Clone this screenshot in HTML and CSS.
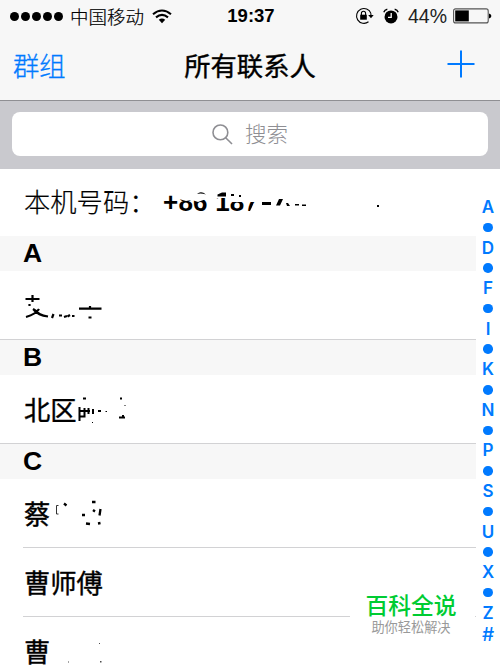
FILE: index.html
```html
<!DOCTYPE html>
<html lang="zh-CN">
<head>
<meta charset="utf-8">
<title>所有联系人</title>
<link rel="stylesheet" href="styles.css">
</head>
<body>
<div class="phone">
  <header class="header">
    <div class="status">
      <div class="status-left">
        <div class="signal"><i></i><i></i><i></i><i></i><i></i></div>
        <span class="carrier">中国移动</span>
        <svg class="wifi" width="20" height="15" viewBox="0 0 20 15"><g fill="none" stroke="#000" stroke-width="2.1"><path d="M1 5.2Q10-2.2 19 5.2"/><path d="M4 8.4Q10 3.4 16 8.4"/></g><path d="M6.8 10.8Q10 8.4 13.2 10.8L10 14.2Z"/></svg>
      </div>
      <span class="time">19:37</span>
      <div class="status-right">
        <svg width="19" height="18" viewBox="0 0 19 18"><path d="M15.9 6.4A7.4 7.4 0 1 0 13.5 14.8M15.9 6.4V9" fill="none" stroke="#000" stroke-width="1.1"/><path d="M13.2 8H18.7L16 11.2Z"/><rect x="5.2" y="7.7" width="6.6" height="5"/><path d="M6.4 8V6.3a2.1 2.1 0 0 1 4.2 0V8" fill="none" stroke="#000" stroke-width="1.1"/></svg>
        <svg class="alarm" width="16" height="17" viewBox="0 0 16 17"><circle cx="8" cy="8.9" r="6.5"/><path d="M.8 4.2Q1.6 1.8 4.3 1.3M11.7 1.3Q14.4 1.8 15.2 4.2" fill="none" stroke="#000" stroke-width="1.4"/><path d="M8.2 5V9.3H5" fill="none" stroke="#fff" stroke-width="1.3"/></svg>
        <span class="percent">44%</span>
        <svg class="battery" width="39" height="16" viewBox="0 0 39 16"><rect x=".6" y=".9" width="34.6" height="14" rx="2" fill="none" stroke="#555" stroke-width="1.1"/><rect x="2.2" y="2.4" width="13.6" height="11"/><path d="M36 5.4Q38.4 6 38.4 8T36 10.4Z"/></svg>
      </div>
    </div>
    <nav class="nav">
      <a class="groups">群组</a>
      <h1>所有联系人</h1>
      <svg class="add" width="28" height="28" viewBox="0 0 28 28"><path d="M14 .5V27.5M.5 14H27.5" stroke="#007aff" stroke-width="2"/></svg>
    </nav>
  </header>

  <div class="search">
    <div class="field">
      <svg width="21" height="21" viewBox="0 0 21 21"><g fill="none" stroke="#8e8e93" stroke-width="1.6"><circle cx="8.4" cy="8.4" r="7.4"/><path d="M13.7 13.7L20 20"/></g></svg>
      <span>搜索</span>
    </div>
  </div>

  <main class="content">
    <div class="list">
      <div class="row own">
        <span class="own-label">本机号码：</span>
        <span class="number">+86 187-7
          <svg class="smudge" width="230" height="40" viewBox="163 182 230 40">
            <path d="M179 188H300V216H257V202H245L240 202H230V198H210V202L206 199L198 202L192 200L186 201L179 199Z" fill="#fff"/>
            <path d="M254 203H259L256 211H250Z" fill="#fff"/>
            <path d="M217.500 196.500V194.500L222 192.500H226V196.500ZM197 194Q201 190.500 206 194.500Q201 193 197 194ZM231 194h3v2h-3zM239 195h2v2h-2zM262 202H271V205H262ZM276 205.500L279 199H283L280 205.500ZM286 203h2l2 3h-3zM295 204h4v1.500h-4zM302 204.500h4v1.500h-4zM377 205h2v2h-2z"/>
          </svg>
        </span>
      </div>

      <div class="section">A</div>
      <div class="row last">
        <svg class="marks" width="110" height="40" viewBox="24 285 110 40"><g fill="none" stroke="#000" stroke-width="2.200"><path d="M25.500 299H39.500M32.500 295V302M29.500 304V306M33 309L39 313M26 317Q36 314 39 309M34 310Q38 315 48 316.500M79 308.600H101.500M88.500 317.500H91.500M90 306V309"/><path d="M53.500 314L52 318M59 315.500H62M64 317L67 316M67.500 316.500L70 315M72 316H74.500"/></g></svg>
      </div>

      <div class="section">B</div>
      <div class="row last">
        <span class="name">北区</span>
        <svg class="marks" width="56" height="40" viewBox="77 389 56 40"><g fill="none" stroke="#000" stroke-width="2"><path d="M79.500 407V421M79 411H90M80 416.500H84.500V408M88.500 408V414M93 409V414M98 411H101M83 398.500H86M120 398.500H122M119 417.500H125M122 416H124"/><path d="M105.500 411.500h1.500M124.500 405.500h1M92 422.500h1" stroke-width="1"/></g></svg>
      </div>

      <div class="section">C</div>
      <div class="row">
        <span class="name">蔡</span>
        <svg class="marks" width="56" height="40" viewBox="50 493 56 40"><path d="M58.500 505.500H56.500V514H58.500" fill="none" stroke="#333" stroke-width="1"/><path d="M64 503.500L66.500 505.500M92 502H95.500M93 510L95 511.500M82 515H85M100.500 509L99.500 515.500M86 523.500L90 524M98 523.500L100.500 523" fill="none" stroke="#000" stroke-width="2.300"/></svg>
      </div>
      <div class="row">
        <span class="name">曹师傅</span>
      </div>
      <div class="row final">
        <span class="name">曹</span>
        <svg class="marks" width="56" height="34" viewBox="50 632 56 34"><path d="M100 661h1.500v1.500h-1.500zM68 661.500h1v1h-1zM99 643h1v1h-1z" opacity=".7"/></svg>
      </div>
    </div>

    <div class="index">
      <span>A</span><i></i><span>D</span><i></i><span>F</span><i></i><span>I</span><i></i><span>K</span><i></i><span>N</span><i></i><span>P</span><i></i><span>S</span><i></i><span>U</span><i></i><span>X</span><i></i><span>Z</span><span class="hash">#</span>
    </div>
  </main>

  <div class="badge">
    <strong>百科全说</strong>
    <small>助你轻松解决</small>
  </div>
</div>
</body>
</html>
```
FILE: styles.css
```css
* { box-sizing: border-box; }

body {
  margin: 0;
  overflow: hidden;
  background: #fff;
  color: #000;
  font-family: "Liberation Sans", "Noto Sans CJK SC", sans-serif;
}

svg { display: block; flex: none; }

.phone {
  position: relative;
  width: 500px;
  height: 666px;
  overflow: hidden;
}

.header {
  height: 101px;
  background: #f7f7f7;
  border-bottom: 1px solid #8f8f93;
}

.status {
  display: grid;
  grid-template-columns: 1fr auto 1fr;
  height: 32px;
  padding: 0 8px 0 10px;
  align-items: center;
}

.status-left, .status-right { display: flex; align-items: center; }
.status-right { justify-content: flex-end; }

.signal { display: flex; gap: 2px; }
.signal i { width: 9px; height: 9px; border-radius: 50%; background: #000; }

.carrier {
  margin-left: 7px;
  font: 300 18.5px/30px "Noto Sans CJK SC", sans-serif;
  -webkit-text-stroke: .2px #000;
}

.wifi { margin-left: 8px; }
.time { font-size: 18.5px; font-weight: bold; line-height: 32px; }
.alarm { margin-left: 9px; }
.percent { margin-left: 9px; font-size: 19.5px; line-height: 32px; color: #222; }
.battery { margin-left: 6px; }

.nav {
  display: grid;
  grid-template-columns: 1fr auto 1fr;
  align-items: center;
  height: 66px;
  padding: 0 25px 0 13px;
}

.groups {
  color: #007aff;
  font: 300 26.3px/40px "Noto Sans CJK SC", sans-serif;
  -webkit-text-stroke: .3px #007aff;
}

h1 {
  margin: 0 -6px 0 6px;
  font: 400 26.3px/40px "Noto Sans CJK SC", sans-serif;
  -webkit-text-stroke: .4px #000;
}

.add { justify-self: end; margin-top: -2px; }

.search {
  height: 68px;
  padding: 11px 12px 13px;
  background: #c9c9ce;
}

.field {
  display: flex;
  justify-content: center;
  align-items: center;
  gap: 12px;
  height: 44px;
  border-radius: 8px;
  background: #fff;
  color: #8e8e93;
  font: 300 21.5px/42px "Noto Sans CJK SC", sans-serif;
}

.field span { margin-top: -2px; }

.content { display: flex; }
.list { width: 476px; }

.row {
  display: flex;
  align-items: center;
  height: 69px;
  margin-left: 23px;
  border-bottom: 1px solid #d2d2d4;
}

.row.last {
  margin-left: 0;
  padding-left: 23px;
}

.row.own { height: 67px; padding-bottom: 1px; border: 0; }
.row.final { height: 49px; padding-top: 15px; align-items: flex-start; border: 0; }

.own-label {
  width: 140px;
  margin-top: -2px;
  padding-left: 1px;
  white-space: nowrap;
  font: 300 26.3px/38px "Noto Sans CJK SC", sans-serif;
  -webkit-text-stroke: .2px #000;
}

.number {
  position: relative;
  font-size: 26px;
  font-weight: bold;
  letter-spacing: .2px;
  line-height: 40px;
  white-space: nowrap;
}

.smudge { position: absolute; left: 0; top: 0; }

.section {
  height: 35px;
  padding-left: 23px;
  background: #f7f7f7;
  font-size: 26.5px;
  font-weight: bold;
  line-height: 35px;
}

.name {
  padding-left: 1px;
  font: 400 26.3px/38px "Noto Sans CJK SC", sans-serif;
  -webkit-text-stroke: .4px #000;
}

.marks { margin-left: 1px; }
.name + .marks { margin-left: 0; }

.index {
  display: flex;
  flex-direction: column;
  align-items: center;
  width: 24px;
  padding-top: 28px;
  color: #007aff;
  font-family: Inter, sans-serif;
  font-size: 17px;
  font-weight: 600;
}

.index span { height: 20.3px; line-height: 20px; }
.index i {
  width: 9.6px;
  height: 9.6px;
  margin: 5.35px 0;
  border-radius: 50%;
  background: #007aff;
}
.index .hash { font-size: 19px; font-weight: 500; line-height: 24px; }

.badge {
  position: absolute;
  left: 350px;
  top: 588px;
  display: flex;
  flex-direction: column;
  align-items: center;
  width: 125px;
  height: 52px;
  padding: 2px 3px 0 0;
  background: #fff;
  font-family: "Noto Sans CJK SC", sans-serif;
}

.badge strong {
  color: #00cc33;
  font-size: 22.8px;
  font-weight: 500;
  line-height: 29px;
}

.badge small {
  color: #999;
  font-size: 13.2px;
  line-height: 16px;
}
```
